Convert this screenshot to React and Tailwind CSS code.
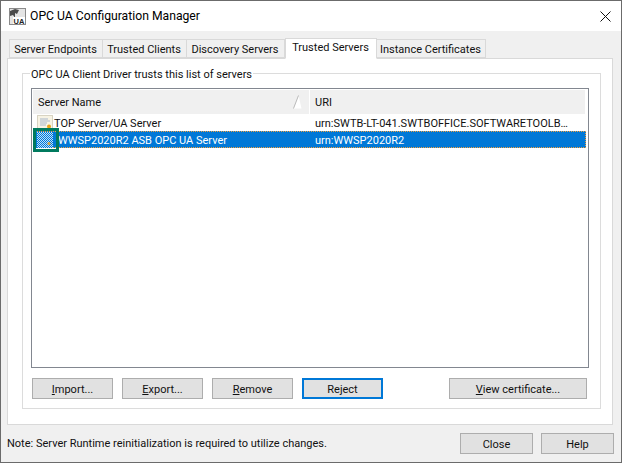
const tabs = [
  { label: 'Server Endpoints', width: 'w-[94px]' },
  { label: 'Trusted Clients', width: 'w-[85px]' },
  { label: 'Discovery Servers', width: 'w-[99px]' },
  { label: 'Trusted Servers', width: 'w-[92px]', active: true },
  { label: 'Instance Certificates', width: 'w-[110px]' },
];

const AppIcon = () => (
  <svg width="17" height="17" viewBox="0 0 17 17">
    <rect x="0.5" y="0.5" width="16" height="16" fill="#e4e4e4" stroke="#8a8a8a" />
    <path d="M1 3 L6 1 L10 2 L8 6 L6 5 L6 10 L4 7 L1 8 Z" fill="#4a4a4a" />
    <rect x="4" y="9" width="12" height="7" fill="#ffffff" />
    <text x="10" y="15.5" textAnchor="middle" fontSize="7.5" fontWeight="700" fill="#222" fontFamily="Liberation Sans, sans-serif">UA</text>
  </svg>
);

const CertIcon = () => (
  <svg className="shrink-0" width="16" height="16" viewBox="0 0 16 16">
    <rect x="0.5" y="0.5" width="15" height="15" fill="#f7f3e4" stroke="#b5ad92" strokeDasharray="1 1" />
    <path d="M3 4h8M3 6h10M3 8h7M3 10h6" stroke="#a9b7cc" />
    <circle cx="12" cy="11.5" r="2" fill="#e8a317" />
    <path d="M11 13l-.5 2.5M13 13l.5 2.5" stroke="#3f74b8" />
  </svg>
);

const SelectedCertIcon = () => (
  <svg className="shrink-0" width="16" height="16" viewBox="0 0 16 16">
    <defs>
      <pattern id="check" width="2" height="2" patternUnits="userSpaceOnUse">
        <rect width="2" height="2" fill="#0078d7" />
        <rect width="1" height="1" fill="#bfe0fa" />
        <rect x="1" y="1" width="1" height="1" fill="#bfe0fa" />
      </pattern>
    </defs>
    <rect width="16" height="16" fill="url(#check)" />
    <circle cx="12" cy="11.5" r="1.5" fill="#d9a441" />
  </svg>
);

const Btn = ({ children, width, focused = false }) => (
  <button
    type="button"
    className={`${width} h-[21px] flex items-center justify-center bg-[#e1e1e1] text-[#111] leading-none pt-[1px] ${
      focused ? 'border-2 border-[#0078d7]' : 'border border-[#adadad]'
    }`}
  >
    <span>{children}</span>
  </button>
);

export default function App() {
  return (
    <div
      className="w-[622px] h-[463px] flex flex-col bg-[#f0f0f0] border border-[#6b6b6b] text-[11px] text-[#111] overflow-hidden"
      style={{ fontFamily: 'Roboto, "Open Sans", sans-serif' }}
    >
      {/* Title bar */}
      <div className="h-[30px] shrink-0 bg-white flex items-center pl-[8px] pr-[10px]">
        <AppIcon />
        <span className="ml-[4px] text-[12.2px] text-black">OPC UA Configuration Manager</span>
        <svg className="ml-auto" width="11" height="11" viewBox="0 0 11 11">
          <path d="M0.5 0.5L10.5 10.5M10.5 0.5L0.5 10.5" stroke="#111" fill="none" />
        </svg>
      </div>

      {/* Tab strip */}
      <div className="h-[21px] mt-[7px] ml-[8px] flex items-end relative z-10 -mb-px shrink-0">
        {tabs.map((t) => (
          <div
            key={t.label}
            className={`${t.width} flex items-center justify-center border border-[#d9d9d9] whitespace-nowrap ${
              t.active ? 'h-[21px] bg-white border-b-white pr-[1px]' : 'h-[19px] bg-[#f0f0f0] -ml-px first:ml-0 mb-[1px] pt-[3px] pr-[1px]'
            }`}
          >
            {t.label}
          </div>
        ))}
      </div>

      {/* Tab panel */}
      <div className="ml-[6px] w-[606px] h-[367px] shrink-0 bg-white border border-[#d9d9d9]">
        <div className="ml-[14px] mt-[14px] w-[579px] h-[336px] border border-[#dcdcdc]">
          <div className="-mt-[7px] ml-[7px] px-[1px] w-fit h-[16px] leading-[16px] bg-white">
            OPC UA Client Driver trusts this list of servers
          </div>

          <div className="relative mt-[5px] ml-[8px] w-[558px] h-[280px] border border-[#828790] p-[1px] pr-[2px]">
            <div className="h-[24px] flex bg-[#f0f0f0] border-r border-white">
              <div className="w-[277px] shrink-0 flex items-center pl-[5px] border-r border-white">
                <span className="pt-[3px]">Server Name</span>
                <svg className="ml-auto mr-[7px]" width="9" height="14" viewBox="0 0 9 14">
                  <path d="M5.5 0.5L8.5 13.5H0.5Z" fill="#fff" />
                  <path d="M5.5 0.5L0.5 13.5" stroke="#aaa" strokeWidth="0.8" fill="none" />
                </svg>
              </div>
              <div className="flex items-center pl-[5px] pt-[3px]">URI</div>
            </div>

            <div className="h-[17px] flex items-center">
              <div className="w-[277px] shrink-0 flex items-center pl-[4px]">
                <CertIcon />
                <span className="ml-[1px] pt-[3px]">TOP Server/UA Server</span>
              </div>
              <div className="pl-[5px] pt-[3px] whitespace-nowrap">urn:SWTB-LT-041.SWTBOFFICE.SOFTWARETOOLB…</div>
            </div>

            <div className="h-[17px] flex items-center bg-[#0078d7] text-white border border-dotted border-[#f0a040]">
              <div className="w-[276px] shrink-0 flex items-center pl-[3px]">
                <SelectedCertIcon />
                <span className="ml-[5px] pt-[3px]">WWSP2020R2 ASB OPC UA Server</span>
              </div>
              <div className="pl-[5px] pt-[3px]">urn:WWSP2020R2</div>
            </div>

            {/* Green highlight drawn over the selected row's icon */}
            <div className="absolute left-[1px] top-[39px] w-[26px] h-[24px] border-[3px] border-[#007a5e]" />
          </div>

          <div className="mt-[10px] ml-[9px] flex">
            <Btn width="w-[81px]"><u>I</u>mport...</Btn>
            <div className="ml-[9px]"><Btn width="w-[81px]"><u>E</u>xport...</Btn></div>
            <div className="ml-[9px]"><Btn width="w-[81px]"><u>R</u>emove</Btn></div>
            <div className="ml-[9px]"><Btn width="w-[81px]" focused>Reject</Btn></div>
            <div className="ml-auto mr-[13px]"><Btn width="w-[138px]"><u>V</u>iew certificate...</Btn></div>
          </div>
        </div>
      </div>

      {/* Footer */}
      <div className="flex-1 flex items-center pl-[6px] pr-[7px]">
        <span className="pt-[1px]">Note: Server Runtime reinitialization is required to utilize changes.</span>
        <div className="ml-auto flex gap-[8px]">
          <Btn width="w-[73px]">Close</Btn>
          <Btn width="w-[73px]">Help</Btn>
        </div>
      </div>
    </div>
  );
}
